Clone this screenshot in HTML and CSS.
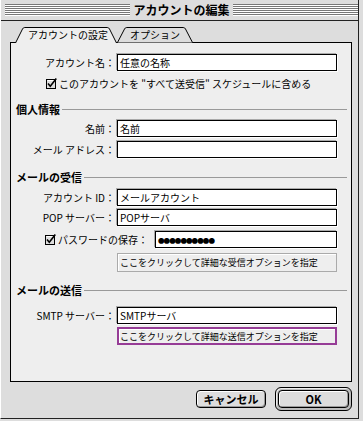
FILE: index.html
```html
<!doctype html>
<html lang="ja">
<head>
    <meta charset="UTF-8">
    <title>アカウントの編集</title>
    <link rel="stylesheet" href="styles.css">
</head>
<body>
<div class="window">
    <div class="titlebar">
        <span class="stripes"></span>
        <span class="title">アカウントの編集</span>
        <span class="stripes"></span>
    </div>

    <div class="content">
        <div class="tabs">
            <div class="tab tab-active">
                <svg class="tab-shape" width="102" height="16" viewBox="0 0 102 16">
                    <path d="M0.5 16 L7.5 2 Q8.2 0.5 9.8 0.5 L92.2 0.5 Q93.8 0.5 94.5 2 L101.5 16 Z" fill="#eee" stroke="none"/>
                    <path d="M0.5 16 L7.5 2 Q8.2 0.5 9.8 0.5 L92.2 0.5 Q93.8 0.5 94.5 2 L101.5 16" fill="none" stroke="#000"/>
                </svg>
                <span class="tab-text">アカウントの設定</span>
            </div>
            <div class="tab tab-plain">
                <svg class="tab-shape" width="76" height="16" viewBox="0 0 76 16">
                    <path d="M0.5 15.5 L7.5 2 Q8.2 0.5 9.8 0.5 L66.2 0.5 Q67.8 0.5 68.5 2 L75.5 15.5" fill="#ddd" stroke="#000"/>
                </svg>
                <span class="tab-text">オプション</span>
            </div>
        </div>

        <div class="panel">
            <div class="row">
                <span class="label">アカウント名：</span>
                <input class="field" type="text" value="任意の名称">
            </div>
            <div class="check-row mt3">
                <svg class="check" width="11" height="11" viewBox="0 0 11 11">
                    <rect x="0.5" y="1.5" width="9" height="9" fill="#ddd" stroke="#000"/>
                    <line x1="1.5" y1="2.5" x2="8.5" y2="2.5" stroke="#fff"/>
                    <path d="M2 5.5 L4.3 8.3 L10.3 0.5" fill="none" stroke="#000" stroke-width="1.6"/>
                </svg>
                <span>このアカウントを "すべて送受信" スケジュールに含める</span>
            </div>

            <div class="section mt10">個人情報</div>
            <div class="row mt4">
                <span class="label">名前：</span>
                <input class="field" type="text" value="名前">
            </div>
            <div class="row mt4">
                <span class="label">メール アドレス：</span>
                <input class="field" type="text" value="">
            </div>

            <div class="section mt12">メールの受信</div>
            <div class="row mt5">
                <span class="label">アカウント ID：</span>
                <input class="field" type="text" value="メールアカウント">
            </div>
            <div class="row mt3">
                <span class="label">POP サーバー：</span>
                <input class="field" type="text" value="POPサーバ">
            </div>
            <div class="row pass-row mt5">
                <svg class="check" width="11" height="11" viewBox="0 0 11 11">
                    <rect x="0.5" y="1.5" width="9" height="9" fill="#ddd" stroke="#000"/>
                    <line x1="1.5" y1="2.5" x2="8.5" y2="2.5" stroke="#fff"/>
                    <path d="M2 5.5 L4.3 8.3 L10.3 0.5" fill="none" stroke="#000" stroke-width="1.6"/>
                </svg>
                <span class="pass-label">パスワードの保存：</span>
                <span class="field pass-field">●●●●●●●●●●</span>
            </div>
            <button class="opt-btn mt5">ここをクリックして詳細な受信オプションを指定</button>

            <div class="section mt11">メールの送信</div>
            <div class="row mt10">
                <span class="label">SMTP サーバー：</span>
                <input class="field" type="text" value="SMTPサーバ">
            </div>
            <button class="opt-btn opt-btn-focus mt3">ここをクリックして詳細な送信オプションを指定</button>
        </div>

        <div class="actions">
            <button class="btn btn-cancel">キャンセル</button>
            <span class="ring"><button class="btn btn-ok">OK</button></span>
        </div>
    </div>
</div>
</body>
</html>
```

FILE: styles.css
```css
* {
    margin: 0;
    padding: 0;
    box-sizing: border-box;
}
body {
    width: 363px;
    height: 421px;
    overflow: hidden;
    background: #ddd;
    font-family: "Noto Sans CJK JP", sans-serif;
    font-size: 10px;
    color: #000;
}
.window {
    width: 359px;
    height: 419px;
    background: #ddd;
    border-left: 1px solid #fff;
    border-right: 1px solid #222;
    border-bottom: 1px solid #222;
}

/* title bar */
.titlebar {
    display: flex;
    align-items: center;
    height: 21px;
    padding-left: 4px;
    border-bottom: 1px solid #222;
}
.stripes {
    flex: 1;
    height: 12px;
    background: repeating-linear-gradient(to bottom, #777 0 1px, #fff 1px 2px);
}
.title {
    width: 103px;
    text-align: center;
    font-size: 12px;
    font-weight: bold;
    line-height: 1;
}

.content {
    padding: 6px 6px 0 9px;
}

/* tabs */
.tabs {
    display: flex;
    height: 16px;
    margin-left: 5px;
    margin-bottom: -1px;
    position: relative;
    z-index: 1;
}
.tab {
    position: relative;
    height: 16px;
    padding-left: 13px;
    line-height: 16px;
}
.tab-active {
    width: 102px;
}
.tab-plain {
    width: 76px;
}
.tab-shape {
    position: absolute;
    left: 0;
    top: 0;
}
.tab-text {
    position: relative;
}

/* panel */
.panel {
    width: 342px;
    height: 340px;
    border: 1px solid #000;
    background: #eee;
    padding-top: 11px;
}
.row {
    display: flex;
    align-items: center;
    height: 17px;
    padding-right: 14px;
}
.label {
    width: 104px;
    margin-right: 2px;
    text-align: right;
    line-height: 1;
    white-space: nowrap;
}
.field {
    width: 220px;
    height: 17px;
    border: 1px solid #000;
    background: #fff;
    font: inherit;
    color: #000;
    padding: 0 2px;
    outline: none;
    box-shadow: -1px -1px 0 #aaa, 1px 1px 0 #fff;
}
.check-row {
    display: flex;
    align-items: center;
    height: 18px;
    padding-left: 35px;
    white-space: nowrap;
}
.check {
    flex: none;
    margin-right: 2px;
}
.pass-row {
    padding-left: 34px;
}
.pass-label {
    white-space: nowrap;
}
.pass-field {
    width: 182px;
    margin-left: auto;
    display: flex;
    align-items: center;
    font-size: 6.5px;
    letter-spacing: -0.9px;
}
.section {
    display: flex;
    align-items: center;
    height: 14px;
    padding-left: 5px;
    margin-right: 4px;
    font-size: 11px;
    font-weight: bold;
    line-height: 1;
}
.section::after {
    content: "";
    flex: 1;
    border-top: 1px solid #999;
    margin-left: 2px;
}
.opt-btn {
    display: block;
    width: 220px;
    height: 19px;
    margin-left: 106px;
    border: 1px solid #aaa;
    background: #eee;
    box-shadow: inset 1px 1px 0 #fff;
    font: 9px "Noto Sans CJK JP", sans-serif;
    letter-spacing: 0;
    text-align: left;
    padding-left: 2px;
    color: #000;
}
.opt-btn-focus {
    height: 18px;
    border: 2px solid #963c96;
    padding-left: 1px;
}

.mt3 { margin-top: 3px; }
.mt4 { margin-top: 4px; }
.mt5 { margin-top: 5px; }
.mt10 { margin-top: 10px; }
.mt11 { margin-top: 11px; }
.mt12 { margin-top: 12px; }

/* dialog buttons */
.actions {
    display: flex;
    justify-content: flex-end;
    align-items: center;
    gap: 9px;
    width: 342px;
    margin-top: 5px;
}
.btn {
    height: 18px;
    border: 1px solid #000;
    border-radius: 4px;
    background: #ddd;
    box-shadow: inset 1px 1px 0 #fff, inset -1px -1px 0 #999;
    font: bold 11px "Noto Sans CJK JP", sans-serif;
    color: #000;
}
.btn-cancel {
    width: 70px;
}
.ring {
    display: flex;
    padding: 2px;
    border: 1px solid #000;
    border-radius: 6px;
    background: #bbb;
    box-shadow: inset 1px 1px 0 #eee;
}
.btn-ok {
    width: 71px;
}
```
